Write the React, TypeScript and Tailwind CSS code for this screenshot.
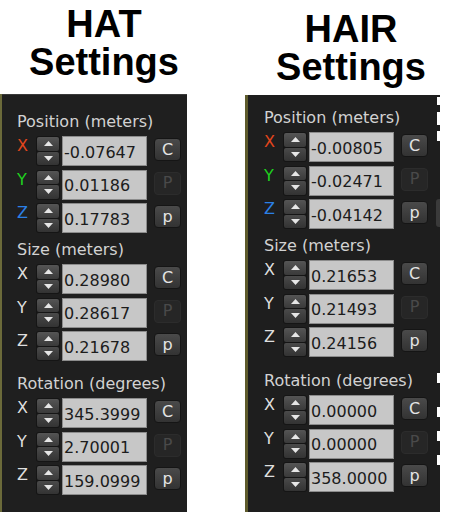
import React from 'react';

type Row = { axis: string; value: string };
type Section = { title: string; rows: Row[]; colored?: boolean };

const axisColor: Record<string, string> = {
  X: 'text-[#e2451c]',
  Y: 'text-[#1fd11f]',
  Z: 'text-[#2b80e6]',
};

const Spinner = () => (
  <div className="flex h-[30px] w-[24px] flex-col gap-[1px] rounded-[3px] bg-[#151515] p-[1px]">
    <div className="flex flex-1 items-center justify-center rounded-[2px] bg-gradient-to-b from-[#555] to-[#3a3a3a]">
      <svg width="9" height="5" viewBox="0 0 9 5">
        <path d="M0 5 L4.5 0 L9 5 Z" fill="#e6e6e6" />
      </svg>
    </div>
    <div className="flex flex-1 items-center justify-center rounded-[2px] bg-gradient-to-b from-[#4a4a4a] to-[#333]">
      <svg width="9" height="5" viewBox="0 0 9 5">
        <path d="M0 0 L9 0 L4.5 5 Z" fill="#e6e6e6" />
      </svg>
    </div>
  </div>
);

const SideButton = ({ label }: { label: string }) => {
  const disabled = label === 'P';
  return (
    <div
      className={
        disabled
          ? 'mt-[2px] flex h-[23px] w-[27px] items-center justify-center rounded-[4px] border border-[#2c2c2c] bg-[#262626] text-[16px] text-[#4a4a4a]'
          : 'mt-[2px] flex h-[23px] w-[27px] items-center justify-center rounded-[4px] border border-[#151515] bg-gradient-to-b from-[#4a4a4a] to-[#333] text-[16px] text-[#e4e4e4]'
      }
    >
      {label}
    </div>
  );
};

const buttons = ['C', 'P', 'p'];

const Panel = ({
  sections,
  offsets,
  pad,
}: {
  sections: Section[];
  offsets: string[];
  pad: string;
}) => (
  <div className={`flex flex-col ${pad}`}>
    {sections.map((s, i) => (
      <div key={s.title} className={`flex flex-col gap-[4px] ${offsets[i]}`}>
        <div className="pl-[15px] text-[16px] leading-[20px] text-[#d2d2d2]">{s.title}</div>
        <div className="flex flex-col gap-[3.5px]">
          {s.rows.map((r, j) => (
            <div key={r.axis} className="flex h-[30px] items-start">
              <div
                className={`w-[19px] pl-[15px] pt-[1px] text-[16px] leading-[18px] box-content ${
                  s.colored ? axisColor[r.axis] : 'text-[#dedede]'
                }`}
              >
                {r.axis}
              </div>
              <Spinner />
              <div className="ml-[2px] flex h-[30px] w-[85px] items-center border border-[#8c8c8c] bg-[#c7c7c7] pl-[1px] pt-[3px] text-[16px] text-[#1c1c1c]">
                {r.value}
              </div>
              <div className="ml-[7px]">
                <SideButton label={buttons[j]} />
              </div>
            </div>
          ))}
        </div>
      </div>
    ))}
  </div>
);

const hat: Section[] = [
  {
    title: 'Position (meters)',
    colored: true,
    rows: [
      { axis: 'X', value: '-0.07647' },
      { axis: 'Y', value: '0.01186' },
      { axis: 'Z', value: '0.17783' },
    ],
  },
  {
    title: 'Size (meters)',
    rows: [
      { axis: 'X', value: '0.28980' },
      { axis: 'Y', value: '0.28617' },
      { axis: 'Z', value: '0.21678' },
    ],
  },
  {
    title: 'Rotation (degrees)',
    rows: [
      { axis: 'X', value: '345.3999' },
      { axis: 'Y', value: '2.70001' },
      { axis: 'Z', value: '159.0999' },
    ],
  },
];

const hair: Section[] = [
  {
    title: 'Position (meters)',
    colored: true,
    rows: [
      { axis: 'X', value: '-0.00805' },
      { axis: 'Y', value: '-0.02471' },
      { axis: 'Z', value: '-0.04142' },
    ],
  },
  {
    title: 'Size (meters)',
    rows: [
      { axis: 'X', value: '0.21653' },
      { axis: 'Y', value: '0.21493' },
      { axis: 'Z', value: '0.24156' },
    ],
  },
  {
    title: 'Rotation (degrees)',
    rows: [
      { axis: 'X', value: '0.00000' },
      { axis: 'Y', value: '0.00000' },
      { axis: 'Z', value: '358.0000' },
    ],
  },
];

const Title = ({ name, width, top }: { name: string; width: string; top: string }) => (
  <div
    className={`${width} ${top} text-center text-[38px] font-bold leading-[38px] text-black`}
    style={{ fontFamily: '"Liberation Sans", Arial, sans-serif' }}
  >
    <div>{name}</div>
    <div>Settings</div>
  </div>
);

export default function App() {
  return (
    <div
      className="flex h-[512px] w-[459px] overflow-hidden bg-white"
      style={{ fontFamily: '"DejaVu Sans", sans-serif' }}
    >
      <div className="flex w-[229px] flex-col">
        <Title name="HAT" width="w-[208px]" top="pt-[5px]" />
        <div className="mt-[13px] flex flex-1">
          <div className="w-[2px] bg-[#6b6a3a]" />
          <div className="w-[185px] border-t border-[#3a3a3a] bg-[#1f1f1f]">
            <Panel
              sections={hat}
              offsets={['', 'mt-[7px]', 'mt-[13px]']}
              pad="pt-[17px]"
            />
          </div>
        </div>
      </div>
      <div className="flex w-[230px] flex-col">
        <Title name="HAIR" width="w-[244px]" top="pt-[10px]" />
        <div className="ml-[16px] mt-[9px] flex flex-1">
          <div className="w-[3px] bg-[#5e5b2c]" />
          <div className="relative w-[192px] bg-[#1e1e1e]">
            <Panel
              sections={hair}
              offsets={['pl-[1px]', 'mt-[7px] pl-[1px]', 'mt-[14px] pl-[1px]']}
              pad="pt-[13px]"
            />
            <div className="absolute right-0 top-[2px] h-[8px] w-[3px] bg-white" />
            <div className="absolute right-0 top-[17px] h-[13px] w-[3px] bg-white" />
            <div className="absolute right-0 top-[36px] h-[10px] w-[3px] bg-white" />
            <div className="absolute right-0 top-[104px] h-[28px] w-[4px] rounded-l-[3px] bg-[#3a3a3a]" />
            <div className="absolute right-0 top-[278px] h-[10px] w-[3px] bg-white" />
            <div className="absolute right-0 top-[312px] h-[10px] w-[3px] bg-white" />
            <div className="absolute right-0 top-[336px] h-[10px] w-[3px] bg-white" />
            <div className="absolute right-0 top-[360px] h-[10px] w-[3px] bg-white" />
          </div>
        </div>
      </div>
    </div>
  );
}
